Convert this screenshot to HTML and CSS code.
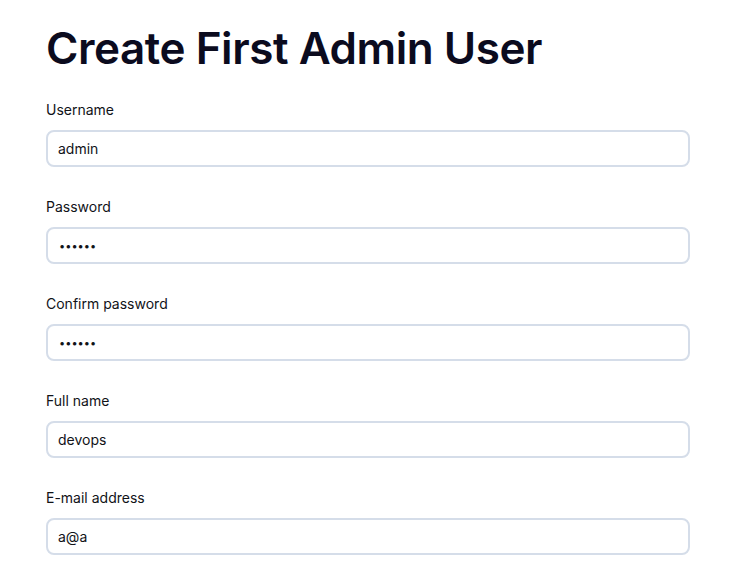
FILE: index.html
```html
<!DOCTYPE html>
<html lang="en">
<head>
<meta charset="utf-8">
<title>Create First Admin User</title>
<link rel="stylesheet" href="styles.css">
</head>
<body>
<main class="page">
  <h1 class="title">Create First Admin User</h1>
  <form class="form">
    <div class="field">
      <label class="label" for="username">Username</label>
      <input class="input" id="username" type="text" value="admin">
    </div>
    <div class="field">
      <label class="label" for="password">Password</label>
      <input class="input input-secret" id="password" type="password" value="123456">
    </div>
    <div class="field">
      <label class="label" for="password2">Confirm password</label>
      <input class="input input-secret" id="password2" type="password" value="123456">
    </div>
    <div class="field">
      <label class="label" for="fullname">Full name</label>
      <input class="input" id="fullname" type="text" value="devops">
    </div>
    <div class="field">
      <label class="label" for="email">E-mail address</label>
      <input class="input" id="email" type="text" value="a@a">
    </div>
  </form>
</main>
</body>
</html>
```

FILE: styles.css
```css
html, body {
  margin: 0;
  padding: 0;
  background: #ffffff;
}
body {
  font-family: Inter, "Noto Sans", sans-serif;
  color: #0f0f1a;
}
.page {
  padding: 24px 0 0 46px;
  width: 644px;
}
.title {
  margin: 0 0 28px 0;
  font-size: 44px;
  line-height: 48px;
  font-weight: 600;
  color: #0b0b1e;
  letter-spacing: -0.45px;
}
.form {
  display: flex;
  flex-direction: column;
  gap: 30px;
}
.field {
  display: flex;
  flex-direction: column;
  gap: 10px;
}
.label {
  font-size: 14px;
  line-height: 20px;
  font-weight: 400;
  color: #111318;
}
.input {
  box-sizing: border-box;
  height: 37px;
  width: 644px;
  margin: 0;
  padding: 0 10px;
  border: 2px solid #d5dde9;
  border-radius: 8px;
  font-family: Inter, "Noto Sans", sans-serif;
  font-size: 14px;
  color: #111318;
  background: #fff;
  outline: none;
}
.input-secret {
  font-size: 11px;
  padding-left: 11px;
}
```
